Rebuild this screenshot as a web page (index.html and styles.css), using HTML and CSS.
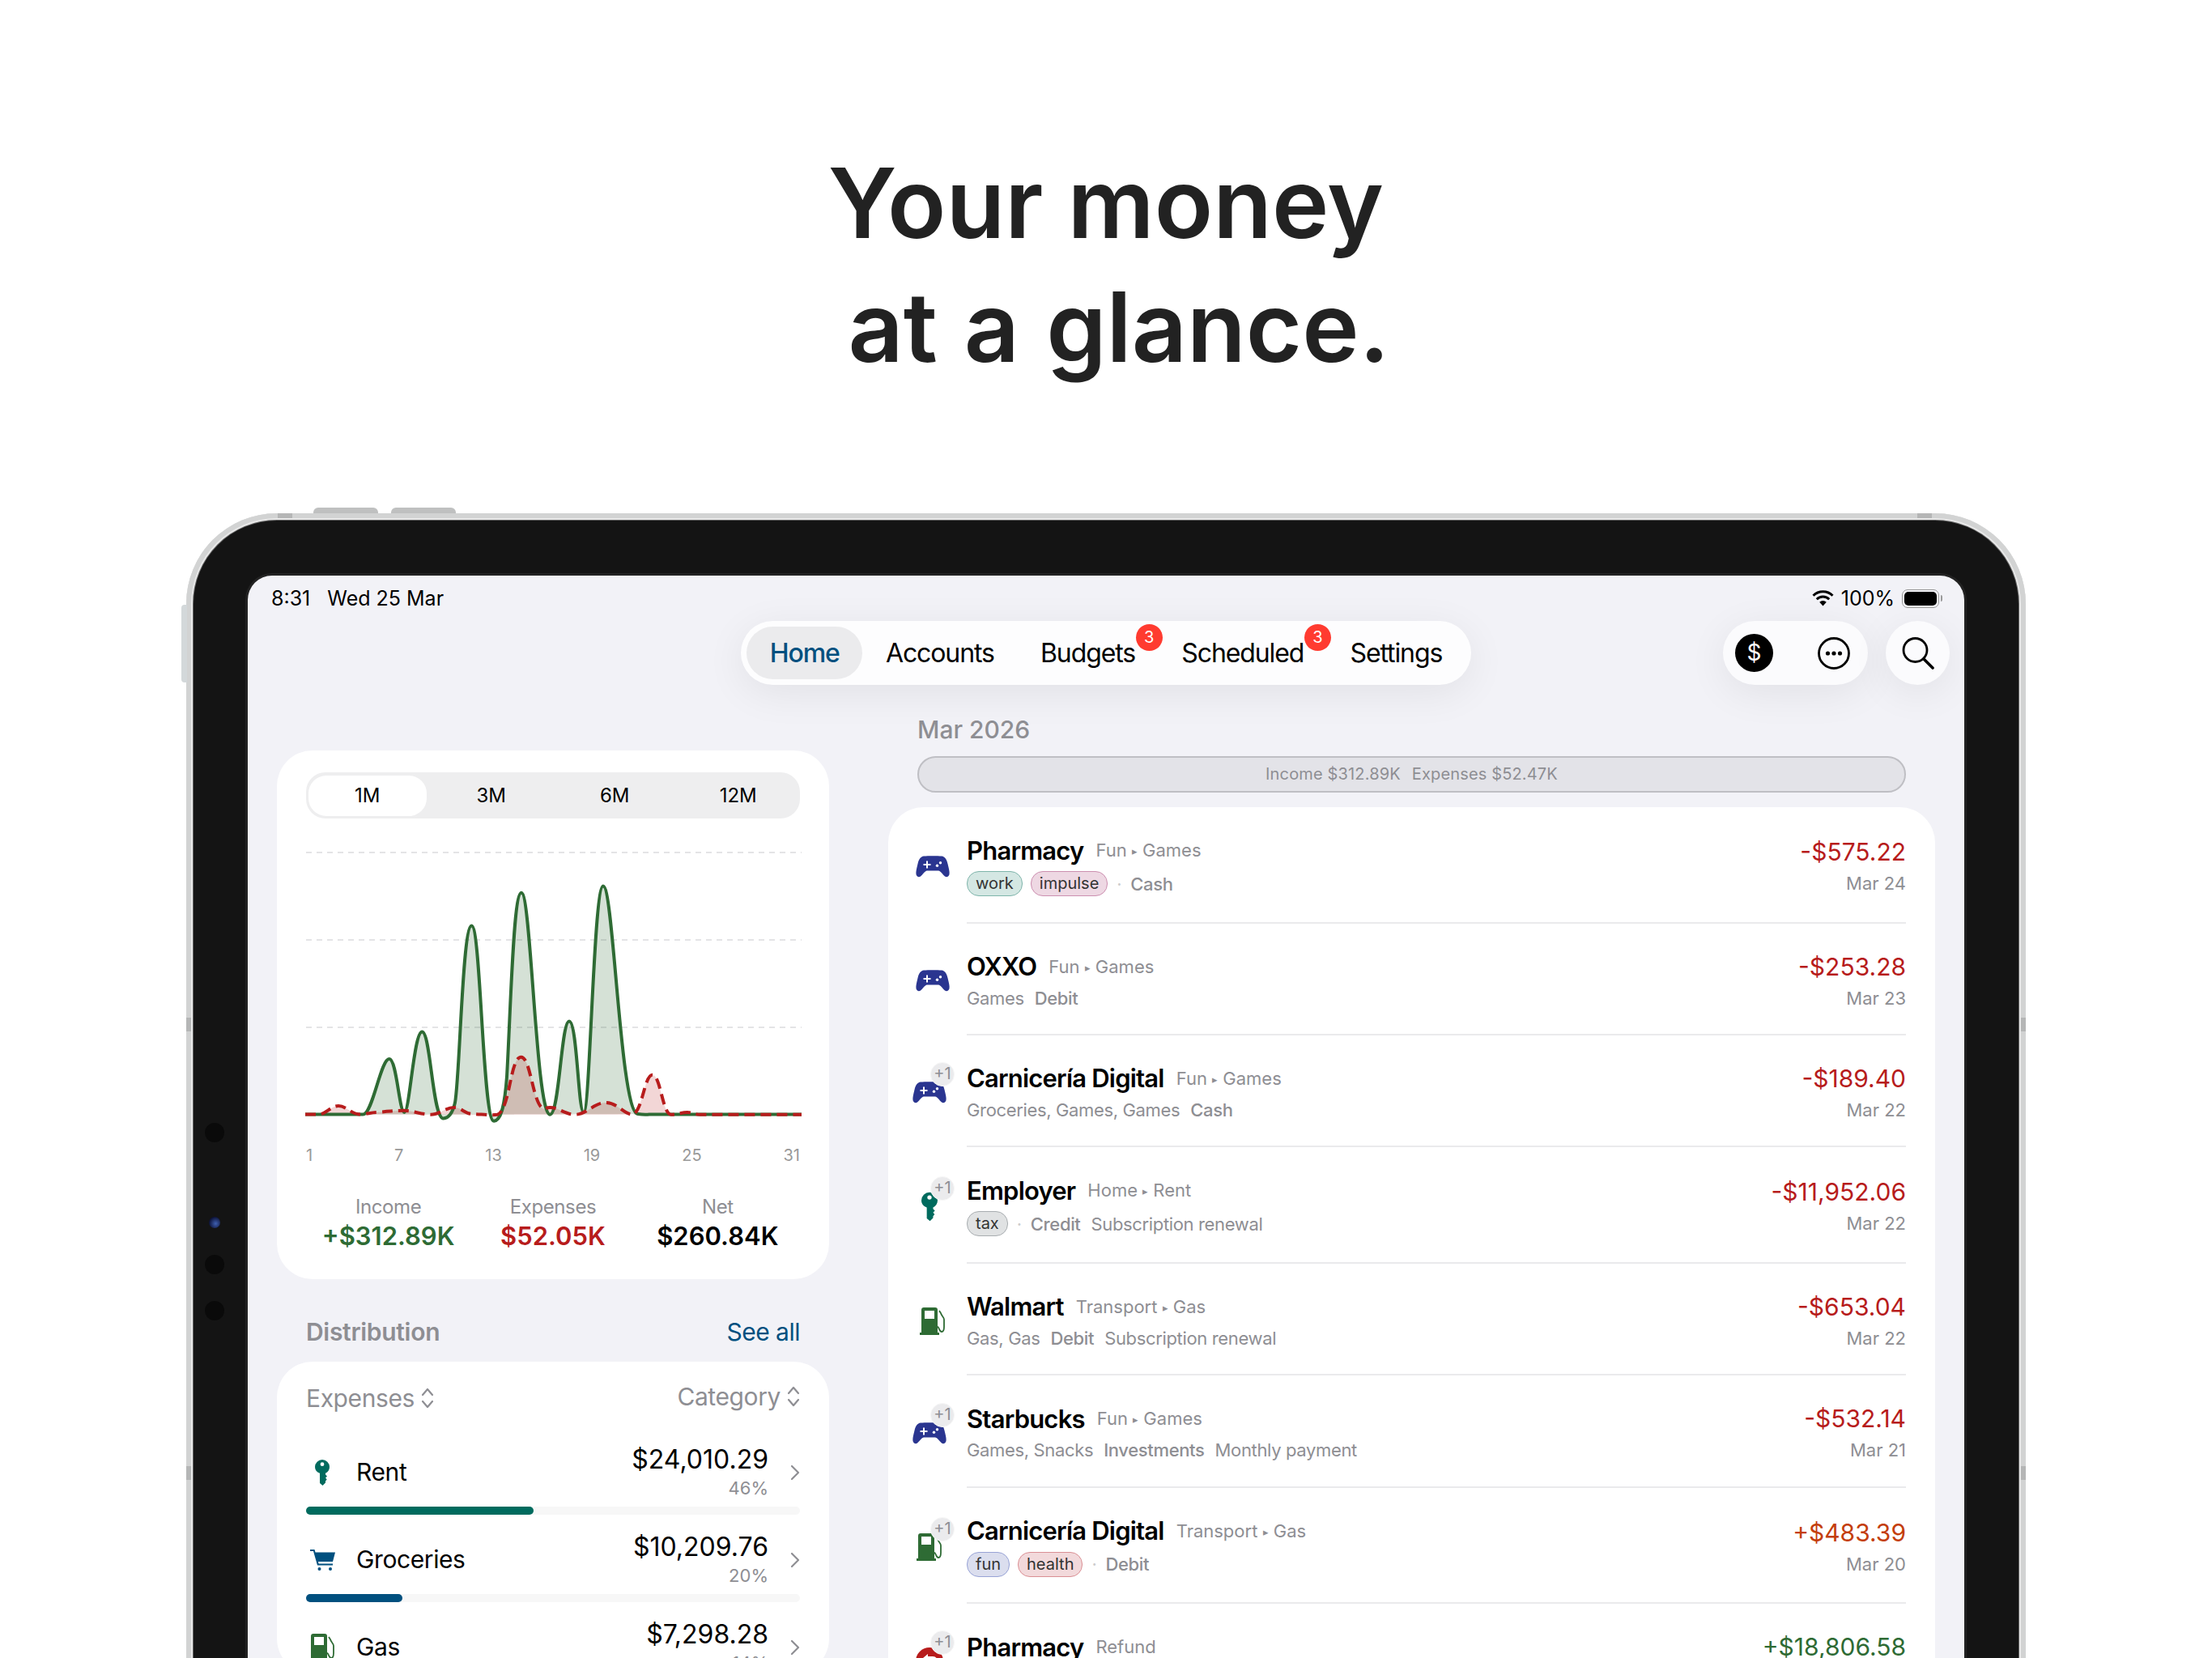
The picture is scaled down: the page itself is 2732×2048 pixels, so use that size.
FILE: index.html
```html
<!DOCTYPE html>
<html lang="en">
<head>
    <meta charset="UTF-8">
    <title>Your money at a glance</title>
    <link rel="stylesheet" href="styles.css">
</head>
<body>
    <!-- icons used more than once -->
    <svg class="sprite" xmlns="http://www.w3.org/2000/svg">
        <symbol id="i-game" viewBox="0 0 42 27">
            <path fill="currentColor" d="M10 .6C15 0 27 0 32 .6c4 .6 6 3.4 7.500 9.400 1.500 6 2.500 10 2 13-.5 3-3.500 4-5.500 2.500-3-2.500-5-6.500-8-7H14c-3 .5-5 4.500-8 7-2 1.500-5 .5-5.500-2.500-.5-3 .5-7 2-13C4 4 6 1.200 10 .6z"/>
            <path fill="#fff" d="M13 6.500h2V10h3.500v2H15v3.500h-2V12H9.500v-2H13z"/>
            <circle fill="#fff" cx="26.500" cy="12.300" r="1.700"/>
            <circle fill="#fff" cx="30.500" cy="8.800" r="1.700"/>
        </symbol>
        <symbol id="i-key" viewBox="0 0 18 32">
            <path fill="currentColor" fill-rule="evenodd" d="M0 9a9 9 0 0 1 18 0c0 3.500-2 6.300-5 7.800v1.700l2 2-2 2 1.700 2-1.700 2v2L9.500 32 6 29V16.800C2 15.300 0 12.500 0 9zm9-5.700a2.400 2.400 0 1 0 0 4.800 2.400 2.400 0 0 0 0-4.800z"/>
        </symbol>
        <symbol id="i-cart" viewBox="0 0 31 26">
            <path fill="currentColor" d="M0 0h5.500l1 3.500H31l-3 11.500H10l.6 2.500H28v2H9L4 2H0z"/>
            <circle fill="currentColor" cx="11.500" cy="24" r="2"/>
            <circle fill="currentColor" cx="25" cy="24" r="2"/>
        </symbol>
        <symbol id="i-fuel" viewBox="0 0 32 34">
            <path fill="currentColor" fill-rule="evenodd" d="M5 0h14c2 0 3 1 3 3v28h2v3H0v-3h2V3c0-2 1-3 3-3zm1 4v10h12V4z"/>
            <path fill="none" stroke="currentColor" stroke-width="1.800" d="M22 24c2 0 2 6 5 6s3-3 3-6V15c0-3-3-4-4-8l-2-3"/>
        </symbol>
        <symbol id="i-chev" viewBox="0 0 12 20">
            <path fill="none" stroke="currentColor" stroke-width="2.200" stroke-linecap="round" stroke-linejoin="round" d="M2 2l8 8-8 8"/>
        </symbol>
        <symbol id="i-updown" viewBox="0 0 16 26">
            <path fill="none" stroke="currentColor" stroke-width="2.200" stroke-linecap="round" stroke-linejoin="round" d="M2 9l6-7 6 7M2 17l6 7 6-7"/>
        </symbol>
    </svg>

    <h1 class="headline">Your money<span class="headline-two">at a glance.</span></h1>

    <div class="device">
        <span class="btn-top btn-top-a"></span>
        <span class="btn-top btn-top-b"></span>
        <span class="btn-side"></span>
        <span class="notch notch-tl"></span>
        <span class="notch notch-tr"></span>
        <span class="notch notch-la"></span>
        <span class="notch notch-lb"></span>
        <span class="notch notch-ra"></span>
        <span class="notch notch-rb"></span>

        <div class="bezel">
            <span class="cam cam-1"></span>
            <span class="cam cam-lens"></span>
            <span class="cam cam-2"></span>
            <span class="cam cam-3"></span>

            <div class="screen">
                <div class="status">
                    <div class="status-left"><span>8:31</span><span>Wed 25 Mar</span></div>
                    <div class="status-right">
                        <svg class="wifi" width="27" height="20" viewBox="0 0 27 20" xmlns="http://www.w3.org/2000/svg">
                            <path fill="none" stroke="#000" stroke-width="3" d="M1.500 6.800a17 17 0 0 1 24 0M5.800 11.200a11 11 0 0 1 15.400 0"/>
                            <path d="M9.200 14.800a6 6 0 0 1 8.600 0L13.500 19.500z"/>
                        </svg>
                        <span>100%</span>
                        <span class="battery"><span class="battery-fill"></span></span>
                    </div>
                </div>

                <div class="topbar">
                    <nav class="tabs">
                        <a class="tab tab-active">Home</a>
                        <a class="tab">Accounts</a>
                        <a class="tab">Budgets<span class="tab-badge">3</span></a>
                        <a class="tab">Scheduled<span class="tab-badge">3</span></a>
                        <a class="tab">Settings</a>
                    </nav>
                    <div class="actions">
                        <div class="action-group">
                            <span class="dollar">$</span>
                            <svg width="40" height="40" viewBox="0 0 40 40" xmlns="http://www.w3.org/2000/svg">
                                <circle cx="20" cy="20" r="18.500" fill="none" stroke="#000" stroke-width="2.800"/>
                                <circle cx="12.500" cy="20" r="2.600"/>
                                <circle cx="20" cy="20" r="2.600"/>
                                <circle cx="27.500" cy="20" r="2.600"/>
                            </svg>
                        </div>
                        <div class="action-search">
                            <svg width="40" height="40" viewBox="0 0 40 40" xmlns="http://www.w3.org/2000/svg">
                                <circle cx="16.500" cy="16" r="14.500" fill="none" stroke="#000" stroke-width="2.800"/>
                                <path d="M27 27l11 11" stroke="#000" stroke-width="3.600" stroke-linecap="round"/>
                            </svg>
                        </div>
                    </div>
                </div>

                <div class="columns">
                    <div class="col-left">
                        <section class="card chart-card">
                            <div class="segments">
                                <span class="segment segment-on">1M</span>
                                <span class="segment">3M</span>
                                <span class="segment">6M</span>
                                <span class="segment">12M</span>
                            </div>
                            <svg class="chart" width="612" height="350" viewBox="0 0 612 350" xmlns="http://www.w3.org/2000/svg">
                                <path class="grid" d="M0 13H612M0 121H612M0 229H612"/>
                                <path class="fill-in" d="M70 336.500C82 338 92 268 102.700 268C112 268 115 334 121.400 334C128 334 133 234.600 143.300 234.600C154 234.600 156 342 169.600 341.600C176 341 181 335 184 322C190 290 193 103.600 204.500 103.600C216 103.600 218 345 232 344.800C240 344.500 245 330 248 290C253 200 256 62.800 266 62.800C278 62.800 284 336.700 301.300 336.700C313 336.700 315 221.600 325 221.600C335 221.600 336 334 342.900 334C351 334 355 54.600 367 54.600C380 54.600 388 336 410 336Z"/>
                                <path class="fill-out" d="M18 336.500C26 334 32 326 40 326C50 326 56 336.500 67 336.500C75 336.500 80 334 88 334C100 333 110 331.800 120.500 331.800C132 331.800 142 336.700 154 336.700C165 336.700 172 328 183 328C192 328 196 336 205.400 336C215 336 226 338 236.600 336.700C252 330 252 265.700 265.600 265.700C278 265.700 280 328 294.600 330C298 328 299 328 301.300 328C312 328 320 336.700 332.600 336.700C347 336.700 355 322 370.500 322C385 322 392 336.700 404 336.700C416 330 418 287.700 427.700 287.700C438 287.700 440 336.700 451 336.700Z"/>
                                <path class="line-in" d="M-1 336.500H70C82 338 92 268 102.700 268C112 268 115 334 121.400 334C128 334 133 234.600 143.300 234.600C154 234.600 156 342 169.600 341.600C176 341 181 335 184 322C190 290 193 103.600 204.500 103.600C216 103.600 218 345 232 344.800C240 344.500 245 330 248 290C253 200 256 62.800 266 62.800C278 62.800 284 336.700 301.300 336.700C313 336.700 315 221.600 325 221.600C335 221.600 336 334 342.900 334C351 334 355 54.600 367 54.600C380 54.600 388 336 410 336C416 337 420 337 424 336.500H612"/>
                                <path class="line-out" d="M-1 336.500H18C26 334 32 326 40 326C50 326 56 336.500 67 336.500C75 336.500 80 334 88 334C100 333 110 331.800 120.500 331.800C132 331.800 142 336.700 154 336.700C165 336.700 172 328 183 328C192 328 196 336 205.400 336C215 336 226 338 236.600 336.700C252 330 252 265.700 265.600 265.700C278 265.700 280 328 294.600 330C298 328 299 328 301.300 328C312 328 320 336.700 332.600 336.700C347 336.700 355 322 370.500 322C385 322 392 336.700 404 336.700C416 330 418 287.700 427.700 287.700C438 287.700 440 336.700 451 336.700C458 336.700 464 334 471 334C477 334 480 336.700 486.600 336.700H612"/>
                            </svg>
                            <div class="axis"><span>1</span><span>7</span><span>13</span><span>19</span><span>25</span><span>31</span></div>
                            <div class="stats">
                                <div class="stat"><div class="stat-label">Income</div><div class="stat-value pos">+$312.89K</div></div>
                                <div class="stat"><div class="stat-label">Expenses</div><div class="stat-value neg">$52.05K</div></div>
                                <div class="stat"><div class="stat-label">Net</div><div class="stat-value">$260.84K</div></div>
                            </div>
                        </section>

                        <div class="section-head">
                            <span class="section-title">Distribution</span>
                            <a class="see-all">See all</a>
                        </div>

                        <section class="card dist-card">
                            <div class="dist-filters">
                                <span class="filter filter-a">Expenses <svg class="updown"><use href="#i-updown"/></svg></span>
                                <span class="filter filter-b">Category <svg class="updown"><use href="#i-updown"/></svg></span>
                            </div>

                            <div class="dist-row">
                                <span class="dist-icon rent"><svg width="18" height="32"><use href="#i-key"/></svg></span>
                                <span class="dist-name">Rent</span>
                                <div class="dist-amount"><div>$24,010.29</div><div class="dist-pct">46%</div></div>
                                <svg class="chev"><use href="#i-chev"/></svg>
                            </div>
                            <div class="track"><div class="bar rent-bg" style="width: 46%"></div></div>

                            <div class="dist-row">
                                <span class="dist-icon groceries"><svg width="31" height="26"><use href="#i-cart"/></svg></span>
                                <span class="dist-name">Groceries</span>
                                <div class="dist-amount"><div>$10,209.76</div><div class="dist-pct">20%</div></div>
                                <svg class="chev"><use href="#i-chev"/></svg>
                            </div>
                            <div class="track"><div class="bar groceries-bg" style="width: 19.500%"></div></div>

                            <div class="dist-row">
                                <span class="dist-icon gas"><svg width="32" height="34"><use href="#i-fuel"/></svg></span>
                                <span class="dist-name">Gas</span>
                                <div class="dist-amount"><div>$7,298.28</div><div class="dist-pct">14%</div></div>
                                <svg class="chev"><use href="#i-chev"/></svg>
                            </div>
                        </section>
                    </div>

                    <div class="col-right">
                        <div class="month">Mar 2026</div>
                        <div class="month-bar"><span>Income $312.89K</span><span>Expenses $52.47K</span></div>

                        <section class="card tx-card">
                            <div class="tx">
                                <div class="tx-icon"><span class="ico game"><svg width="42" height="27"><use href="#i-game"/></svg></span></div>
                                <div class="tx-body has-tags">
                                    <div class="tx-main">
                                        <div class="tx-title"><b>Pharmacy</b><span>Fun <i>▸</i> Games</span></div>
                                        <div class="tx-meta tagged"><span class="tag tag-work">work</span><span class="tag tag-impulse">impulse</span><span class="sep">·</span><em>Cash</em></div>
                                    </div>
                                    <div class="tx-side"><div class="amt neg">-$575.22</div><div class="date">Mar 24</div></div>
                                </div>
                            </div>
                            <div class="tx">
                                <div class="tx-icon"><span class="ico game"><svg width="42" height="27"><use href="#i-game"/></svg></span></div>
                                <div class="tx-body">
                                    <div class="tx-main">
                                        <div class="tx-title"><b>OXXO</b><span>Fun <i>▸</i> Games</span></div>
                                        <div class="tx-meta"><span>Games</span><em>Debit</em></div>
                                    </div>
                                    <div class="tx-side"><div class="amt neg">-$253.28</div><div class="date">Mar 23</div></div>
                                </div>
                            </div>
                            <div class="tx">
                                <div class="tx-icon"><span class="ico multi game"><svg width="42" height="27"><use href="#i-game"/></svg><span class="plus">+1</span></span></div>
                                <div class="tx-body">
                                    <div class="tx-main">
                                        <div class="tx-title"><b>Carnicería Digital</b><span>Fun <i>▸</i> Games</span></div>
                                        <div class="tx-meta"><span>Groceries, Games, Games</span><em>Cash</em></div>
                                    </div>
                                    <div class="tx-side"><div class="amt neg">-$189.40</div><div class="date">Mar 22</div></div>
                                </div>
                            </div>
                            <div class="tx">
                                <div class="tx-icon"><span class="ico multi rent"><svg width="20" height="37"><use href="#i-key"/></svg><span class="plus">+1</span></span></div>
                                <div class="tx-body has-tags">
                                    <div class="tx-main">
                                        <div class="tx-title"><b>Employer</b><span>Home <i>▸</i> Rent</span></div>
                                        <div class="tx-meta tagged"><span class="tag tag-tax">tax</span><span class="sep">·</span><em>Credit</em><span class="note">Subscription renewal</span></div>
                                    </div>
                                    <div class="tx-side"><div class="amt neg">-$11,952.06</div><div class="date">Mar 22</div></div>
                                </div>
                            </div>
                            <div class="tx">
                                <div class="tx-icon"><span class="ico gas"><svg width="32" height="34"><use href="#i-fuel"/></svg></span></div>
                                <div class="tx-body">
                                    <div class="tx-main">
                                        <div class="tx-title"><b>Walmart</b><span>Transport <i>▸</i> Gas</span></div>
                                        <div class="tx-meta"><span>Gas, Gas</span><em>Debit</em><span>Subscription renewal</span></div>
                                    </div>
                                    <div class="tx-side"><div class="amt neg">-$653.04</div><div class="date">Mar 22</div></div>
                                </div>
                            </div>
                            <div class="tx">
                                <div class="tx-icon"><span class="ico multi game"><svg width="42" height="27"><use href="#i-game"/></svg><span class="plus">+1</span></span></div>
                                <div class="tx-body">
                                    <div class="tx-main">
                                        <div class="tx-title"><b>Starbucks</b><span>Fun <i>▸</i> Games</span></div>
                                        <div class="tx-meta"><span>Games, Snacks</span><em>Investments</em><span>Monthly payment</span></div>
                                    </div>
                                    <div class="tx-side"><div class="amt neg">-$532.14</div><div class="date">Mar 21</div></div>
                                </div>
                            </div>
                            <div class="tx">
                                <div class="tx-icon"><span class="ico multi gas"><svg width="32" height="34"><use href="#i-fuel"/></svg><span class="plus">+1</span></span></div>
                                <div class="tx-body has-tags">
                                    <div class="tx-main">
                                        <div class="tx-title"><b>Carnicería Digital</b><span>Transport <i>▸</i> Gas</span></div>
                                        <div class="tx-meta tagged"><span class="tag tag-fun">fun</span><span class="tag tag-health">health</span><span class="sep">·</span><em>Debit</em></div>
                                    </div>
                                    <div class="tx-side"><div class="amt mixed">+$483.39</div><div class="date">Mar 20</div></div>
                                </div>
                            </div>
                            <div class="tx">
                                <div class="tx-icon">
                                    <span class="ico multi">
                                        <svg class="refund" width="34" height="34" viewBox="0 0 34 34" xmlns="http://www.w3.org/2000/svg">
                                            <circle cx="17" cy="17" r="17" fill="#b71c1c"/>
                                            <path d="M9 13l6-5v3h6c4 0 6 3 6 6s-2 6-6 6h-5v-3h5c2 0 3-1 3-3s-1-3-3-3h-6v3z" fill="#fff"/>
                                        </svg>
                                        <span class="plus">+1</span>
                                    </span>
                                </div>
                                <div class="tx-body">
                                    <div class="tx-main">
                                        <div class="tx-title"><b>Pharmacy</b><span>Refund</span></div>
                                        <div class="tx-meta"></div>
                                    </div>
                                    <div class="tx-side"><div class="amt pos">+$18,806.58</div></div>
                                </div>
                            </div>
                        </section>
                    </div>
                </div>
            </div>
        </div>
    </div>
</body>
</html>
```

FILE: styles.css
```css
*{
    margin: 0;
    padding: 0;
    box-sizing: border-box;
}
html,body{
    width: 2732px;
    height: 2048px;
    overflow: hidden;
    background-color: #fff;
}
body{
    font-family: Inter, "Liberation Sans", sans-serif;
    color: #000;
}
.sprite{
    display: none;
}
svg{
    display: block;
}
.pos{ color: #2e6b34; }
.neg{ color: #b71c1c; }
.mixed{ color: #c43e0c; }

/* headline */
.headline{
    padding-top: 175px;
    height: 634px;
    text-align: center;
    font-size: 119px;
    line-height: 153px;
    font-weight: 600;
    color: #222;
}
.headline-two{
    display: block;
    padding-left: 32px;
    word-spacing: 3px;
}

/* device frame */
.device{
    position: relative;
    width: 2272px;
    margin-left: 230px;
    padding: 9px;
    border-radius: 112px;
    background-color: #d6d7d7;
    box-shadow: inset 0 0 0 6px #d2d3d3, inset 0 0 0 8px #e8e8e8;
}
.btn-top{
    position: absolute;
    top: -7px;
    width: 80px;
    height: 7px;
    border-radius: 6px 6px 0 0;
    background-color: #bfc0c0;
}
.btn-top-a{ left: 157px; }
.btn-top-b{ left: 253px; }
.btn-side{
    position: absolute;
    left: -6px;
    top: 113px;
    width: 7px;
    height: 96px;
    border-radius: 4px 0 0 4px;
    background-color: #d3d8da;
}
.notch{
    position: absolute;
    background-color: #b5b6b6;
}
.notch-tl,.notch-tr{ top: 0; width: 18px; height: 6px; }
.notch-tl{ left: 113px; }
.notch-tr{ left: 2138px; }
.notch-la,.notch-lb,.notch-ra,.notch-rb{ width: 6px; height: 17px; }
.notch-la,.notch-lb{ left: 0; }
.notch-ra,.notch-rb{ right: 0; }
.notch-la,.notch-ra{ top: 623px; }
.notch-lb,.notch-rb{ top: 1177px; }

.bezel{
    position: relative;
    padding: 68px 67px;
    border-radius: 103px;
    background-color: #141414;
    box-shadow: 0 0 0 1px #666;
}
.cam{
    position: absolute;
    left: 14px;
    width: 24px;
    height: 24px;
    border-radius: 50%;
    background-color: #0a0a0a;
}
.cam-1{ top: 744px; }
.cam-lens{
    top: 860px;
    left: 19px;
    width: 14px;
    height: 14px;
    background: radial-gradient(circle at 60% 60%, #3f60b0, #0c1238 70%);
}
.cam-2{ top: 907px; }
.cam-3{ top: 964px; }

.screen{
    border-radius: 30px;
    background-color: #f2f2f7;
    box-shadow: 0 0 0 3px #222;
    height: 1500px;
    overflow: hidden;
}

/* status bar */
.status{
    height: 56px;
    display: flex;
    justify-content: space-between;
    align-items: center;
    padding: 0 29px;
    font-size: 25px;
}
.status-left{
    display: flex;
    gap: 21px;
}
.status-right{
    display: flex;
    align-items: center;
    gap: 9px;
}
.battery{
    display: block;
    position: relative;
    width: 46px;
    height: 23px;
    margin-right: 2px;
    padding: 2px;
    border: 1.500px solid #999;
    border-radius: 7px;
}
.battery::after{
    content: '';
    position: absolute;
    right: -5px;
    top: 6px;
    width: 2px;
    height: 8px;
    border-radius: 0 2px 2px 0;
    background-color: #999;
}
.battery-fill{
    display: block;
    height: 100%;
    border-radius: 5px;
    background-color: #000;
}

/* tab bar */
.topbar{
    display: grid;
    grid-template-columns: 1fr auto 1fr;
    padding: 0 18px;
}
.tabs{
    grid-column: 2;
    display: flex;
    height: 79px;
    padding: 7px;
    border-radius: 40px;
    background-color: #fdfdfe;
    box-shadow: 0 10px 50px rgba(0,0,0,.07);
}
.tab{
    position: relative;
    height: 65px;
    padding: 0 28.600px;
    border-radius: 33px;
    font-size: 32px;
    line-height: 65px;
    letter-spacing: -1.100px;
}
.tab-active{
    background-color: #ebebed;
    color: #00507f;
    font-weight: 500;
}
.tab-badge{
    position: absolute;
    top: -3px;
    right: -5px;
    width: 33px;
    height: 33px;
    border-radius: 50%;
    background-color: #ff3b30;
    color: #fff;
    font-size: 20px;
    line-height: 33px;
    text-align: center;
    letter-spacing: 0;
}
.actions{
    grid-column: 3;
    justify-self: end;
    display: flex;
    gap: 22px;
}
.action-group,.action-search{
    display: flex;
    align-items: center;
    height: 79px;
    border-radius: 40px;
    background-color: #fbfbfd;
    box-shadow: 0 10px 50px rgba(0,0,0,.07);
}
.action-group{
    width: 179px;
    padding-left: 15px;
    gap: 55px;
}
.action-search{
    width: 79px;
    justify-content: center;
}
.dollar{
    width: 47px;
    height: 47px;
    border-radius: 50%;
    background-color: #000;
    color: #fff;
    font-size: 28px;
    line-height: 47px;
    text-align: center;
}

/* columns */
.columns{
    display: flex;
    gap: 73px;
    padding: 0 36px;
}
.col-left{
    width: 682px;
    flex: none;
    padding-top: 81px;
}
.col-right{
    flex: 1;
    padding-top: 35px;
}
.card{
    border-radius: 44px;
    background-color: #fff;
}

/* chart card */
.chart-card{
    padding: 27px 36px 33px;
}
.segments{
    display: grid;
    grid-template-columns: repeat(4,1fr);
    height: 57px;
    padding: 4px 0;
    border-radius: 24px;
    background-color: #eeeeef;
    font-size: 24px;
    line-height: 50px;
    text-align: center;
}
.segment-on{
    margin: 0 4px 0 3px;
    border-radius: 22px;
    background-color: #fff;
}
.chart{
    margin-top: 29px;
    overflow: visible;
}
.grid{
    fill: none;
    stroke: #e4e4e6;
    stroke-width: 2;
    stroke-dasharray: 7 6;
}
.fill-in{ fill: rgba(46,107,52,.2); }
.fill-out{ fill: rgba(183,28,28,.18); }
.line-in{
    fill: none;
    stroke: #2e6b34;
    stroke-width: 4;
}
.line-out{
    fill: none;
    stroke: #b71c1c;
    stroke-width: 4;
    stroke-dasharray: 13 7;
}
.axis{
    display: flex;
    justify-content: space-between;
    margin-top: 24px;
    font-size: 20px;
    line-height: 26px;
    color: #999;
}
.stats{
    display: grid;
    grid-template-columns: repeat(3,1fr);
    margin-top: 36px;
    text-align: center;
}
.stat-label{
    font-size: 24px;
    line-height: 30px;
    letter-spacing: -.4px;
    color: #8e8e93;
}
.stat-value{
    margin-top: 1px;
    font-size: 31px;
    line-height: 40px;
    font-weight: 600;
}

/* distribution */
.section-head{
    display: flex;
    justify-content: space-between;
    margin: 45px 36px 17px;
    font-size: 30px;
    line-height: 40px;
}
.section-title{
    font-weight: 600;
    letter-spacing: -.3px;
    color: #8e8e93;
}
.see-all{
    letter-spacing: -.5px;
    color: #00507f;
}
.dist-card{
    padding: 25px 36px 0;
}
.dist-filters{
    display: flex;
    justify-content: space-between;
    font-size: 30px;
    line-height: 40px;
    letter-spacing: -.4px;
    color: #8e8e93;
}
.filter{
    display: flex;
    align-items: center;
    gap: 8px;
}
.filter-b{
    position: relative;
    top: -2px;
}
.updown{
    width: 16px;
    height: 26px;
}
.dist-row{
    display: flex;
    align-items: center;
    margin-top: 22px;
}
.dist-filters + .dist-row{
    margin-top: 38px;
}
.dist-icon{
    display: flex;
    justify-content: center;
    width: 40px;
    margin-right: 22px;
}
.dist-name{
    flex: 1;
    padding-bottom: 2px;
    font-size: 30px;
    letter-spacing: -.4px;
}
.dist-amount{
    font-size: 32px;
    line-height: 36px;
    text-align: right;
}
.dist-pct{
    margin-top: 3px;
    font-size: 22px;
    line-height: 28px;
    color: #8e8e93;
}
.chev{
    width: 12px;
    height: 20px;
    margin-left: 27px;
    color: #8e8e93;
}
.track{
    height: 10px;
    margin-top: 9px;
    border-radius: 5px;
    background-color: #f7f7f7;
}
.bar{
    height: 100%;
    border-radius: 5px;
}
.rent{ color: #006b5e; }
.groceries{ color: #00507f; }
.gas{ color: #2e6b34; }
.game{ color: #2a3590; }
.rent-bg{ background-color: #006b5e; }
.groceries-bg{ background-color: #00507f; }

/* month header */
.month{
    font-size: 30px;
    line-height: 40px;
    font-weight: 500;
    color: #8e8e93;
    padding-left: 36px;
}
.month-bar{
    display: flex;
    justify-content: center;
    gap: 14px;
    height: 45px;
    margin: 13px 36px 18px;
    border: 2px solid #bfbfc4;
    border-radius: 23px;
    background-color: #e3e3e8;
    font-size: 20px;
    line-height: 41px;
    letter-spacing: .15px;
    color: #8e8e93;
}

/* transactions */
.tx{
    display: flex;
}
.tx-icon{
    flex: none;
    display: flex;
    align-items: center;
    width: 97px;
    padding: 3px 0 0 34px;
}
.ico{
    position: relative;
    display: flex;
    justify-content: center;
    align-items: center;
    width: 42px;
    height: 27px;
}
.ico svg{
    flex: none;
}
.multi{
    margin-left: -4px;
}
.plus{
    position: absolute;
    top: -24px;
    left: 22px;
    width: 30px;
    height: 30px;
    border: 1.500px solid #f7f7f7;
    border-radius: 50%;
    background-color: #ebebed;
    color: #8e8e93;
    font-size: 20px;
    line-height: 27px;
    text-align: center;
}
.tx-body{
    flex: 1;
    display: flex;
    justify-content: space-between;
    padding: 33px 36px 32.400px 0;
    position: relative;
}
.tx-body::after{
    content: '';
    position: absolute;
    left: 0;
    right: 36px;
    bottom: 0;
    height: 2px;
    background-color: #eaeaec;
}
.tx-title{
    display: flex;
    align-items: center;
    gap: 15px;
    height: 40px;
}
.tx-title b{
    font-size: 31px;
    font-weight: 600;
    letter-spacing: -.8px;
}
.tx-title span{
    font-size: 22px;
    color: #8e8e93;
}
.tx-title i{
    font-style: normal;
    font-size: 13px;
    vertical-align: 2px;
}
.tx-meta{
    display: flex;
    align-items: center;
    gap: 13px;
    min-height: 28px;
    margin-top: 5px;
    font-size: 22px;
    letter-spacing: -.35px;
    color: #8e8e93;
}
.tx-meta em{
    font-style: normal;
    font-weight: 500;
}
.tagged{
    height: 33.200px;
    gap: 10px;
}
.tag{
    height: 31px;
    padding: 0 10px;
    border: 1.500px solid;
    border-radius: 15px;
    font-size: 20px;
    line-height: 28px;
    letter-spacing: 0;
    color: #333;
}
.sep{
    width: 8px;
    text-align: center;
    color: #ccc;
}
.tagged .note{
    margin-left: 3px;
}
.tag-work{ background-color: #d4e7e3; border-color: #7fb5ab; }
.tag-impulse{ background-color: #eed8e3; border-color: #cc8fb0; }
.tag-tax{ background-color: #e0e2e3; border-color: #a8adb0; }
.tag-fun{ background-color: #dbdeee; border-color: #98a3d6; }
.tag-health{ background-color: #f2d9db; border-color: #da8f94; }
.tx-side{
    text-align: right;
}
.has-tags .tx-side{
    padding-top: 2px;
}
.amt{
    font-size: 30px;
    line-height: 40px;
}
.date{
    margin-top: 5px;
    font-size: 22px;
    line-height: 28px;
    color: #8e8e93;
}
```
